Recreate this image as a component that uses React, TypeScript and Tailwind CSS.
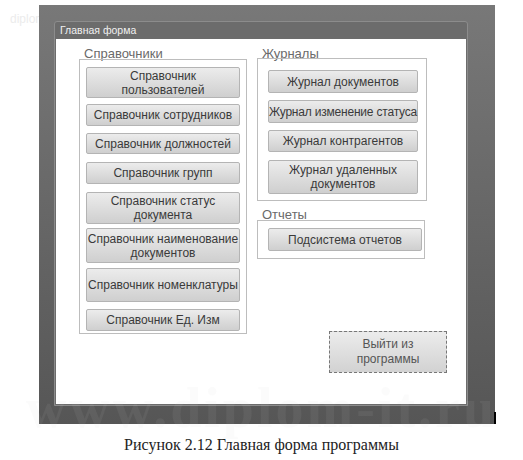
import React from 'react';

const btn =
  'flex items-center justify-center text-center whitespace-nowrap leading-[14px] text-[12px] text-[#3a3a3a] border border-[#b4b4b4] rounded-[2px] bg-gradient-to-b from-[#ececec] to-[#cfcfcf]';

function Btn({ label, h, className = '' }: { label: React.ReactNode; h: string; className?: string }) {
  return <div className={`${btn} ${h} ${className}`}>{label}</div>;
}

export default function App() {
  return (
    <div className="relative w-[523px] h-[460px] bg-white overflow-hidden font-['Liberation_Sans',Arial,sans-serif]">
      <div className="absolute left-[10px] top-[10px] text-[12px] text-[#ececec]">diplom</div>

      {/* outer frame */}
      <div className="relative ml-[39px] mt-[5px] w-[456px] h-[419px] bg-gradient-to-b from-[#787878] to-[#565656] pt-[16px] pl-[15px] pr-[27px] pb-[18px]">
        {/* window */}
        <div className="flex flex-col h-full border border-[#8c8c8c] rounded-t-[3px] bg-[#6c6c6c]">
          <div className="h-[17px] flex items-center pl-[5px] text-[10.5px] text-[#f0f0f0]">Главная форма</div>
          <div className="flex-1 bg-white mx-[1px] mb-[1px] flex pl-[23px] pt-[8px]">
            {/* left column */}
            <div className="flex flex-col w-[168px]">
              <div className="text-[13px] leading-[13px] text-[#6a6a6a] pl-[5px]">Справочники</div>
              <div className="mt-[-1px] h-[275px] border border-[#bdbdbd] flex flex-col pl-[6px] pt-[7px] w-[168px]">
                <div className="w-[154px] flex flex-col">
                  <Btn h="h-[31px]" label={<>Справочник<br />пользователей</>} />
                  <Btn h="h-[22px]" className="mt-[6px]" label="Справочник сотрудников" />
                  <Btn h="h-[21px]" className="mt-[7px]" label="Справочник должностей" />
                  <Btn h="h-[22px]" className="mt-[8px]" label="Справочник групп" />
                  <Btn h="h-[32px]" className="mt-[8px]" label={<>Справочник статус<br />документа</>} />
                  <Btn h="h-[35px]" className="mt-[4px]" label={<>Справочник наименование<br />документов</>} />
                  <Btn h="h-[34px]" className="mt-[5px]" label="Справочник номенклатуры" />
                  <Btn h="h-[22px]" className="mt-[7px]" label="Справочник Ед. Изм" />
                </div>
              </div>
            </div>

            {/* right column */}
            <div className="flex flex-col ml-[10px] w-[170px]">
              <div className="text-[13px] leading-[13px] text-[#6a6a6a] pl-[5px]">Журналы</div>
              <div className="mt-[-2px] h-[143px] border border-[#bdbdbd] flex flex-col pl-[10px] pt-[11px]">
                <div className="w-[150px] flex flex-col">
                  <Btn h="h-[23px]" label="Журнал документов" />
                  <Btn h="h-[23px]" className="mt-[7px] tracking-[-0.2px]" label="Журнал изменение статуса" />
                  <Btn h="h-[22px]" className="mt-[7px]" label="Журнал контрагентов" />
                  <Btn h="h-[34px]" className="mt-[8px]" label={<>Журнал удаленных<br />документов</>} />
                </div>
              </div>
              <div className="mt-[7px] text-[13px] leading-[13px] text-[#6a6a6a] pl-[5px]">Отчеты</div>
              <div className="mt-[-1px] w-[168px] h-[39px] border border-[#bdbdbd] flex pl-[10px] pt-[7px]">
                <Btn h="h-[23px]" className="w-[154px]" label="Подсистема отчетов" />
              </div>
              <div className="ml-[72px] mt-[72px] w-[118px] h-[42px] flex items-center justify-center text-center text-[12px] leading-[15px] text-[#555] border border-dashed border-[#777] bg-gradient-to-b from-[#ececec] to-[#d2d2d2]">
                Выйти из<br />программы
              </div>
            </div>
          </div>
        </div>
        <div className="absolute right-[-1px] bottom-0 w-[2px] h-[12px] bg-black" />
      </div>

      <div className="absolute left-0 right-0 top-[386px] text-center font-['Liberation_Serif',serif] font-bold text-[56px] leading-[44px] text-[rgba(200,200,200,0.08)] tracking-[3px] pointer-events-none">
        www.diplom-it.ru
      </div>

      <div className="mt-[9px] text-center font-['Liberation_Serif',serif] text-[16px] text-[#222]">
        Рисунок 2.12 Главная форма программы
      </div>
    </div>
  );
}
